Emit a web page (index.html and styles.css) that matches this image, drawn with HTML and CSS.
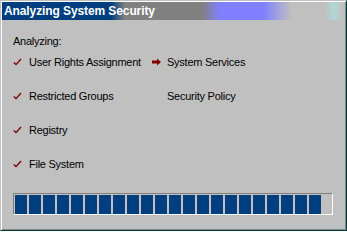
FILE: index.html
```
<!DOCTYPE html>
<html lang="en">
<head>
    <meta charset="UTF-8">
    <title>Analyzing System Security</title>
    <link rel="stylesheet" href="styles.css">
</head>
<body>
    <div class="window">
        <div class="titlebar">Analyzing System Security</div>
        <div class="content">
            <p class="heading">Analyzing:</p>
            <ul class="tasks">
                <li class="task"><span class="icon"><svg width="9" height="8" viewBox="0 0 9 8"><path d="M0.8 4.6 L3 6.6 L8 1" fill="none" stroke="#800000" stroke-width="1.4"/></svg></span>User Rights Assignment</li>
                <li class="task"><span class="icon"><svg width="11" height="8" viewBox="0 0 11 8"><path d="M1 2.5 H6 V0.5 L10 4 L6 7.5 V5.5 H1 Z" fill="#800000"/></svg></span>System Services</li>
                <li class="task"><span class="icon"><svg width="9" height="8" viewBox="0 0 9 8"><path d="M0.8 4.6 L3 6.6 L8 1" fill="none" stroke="#800000" stroke-width="1.4"/></svg></span>Restricted Groups</li>
                <li class="task"><span class="icon"></span>Security Policy</li>
                <li class="task"><span class="icon"><svg width="9" height="8" viewBox="0 0 9 8"><path d="M0.8 4.6 L3 6.6 L8 1" fill="none" stroke="#800000" stroke-width="1.4"/></svg></span>Registry</li>
                <li class="task"></li>
                <li class="task"><span class="icon"><svg width="9" height="8" viewBox="0 0 9 8"><path d="M0.8 4.6 L3 6.6 L8 1" fill="none" stroke="#800000" stroke-width="1.4"/></svg></span>File System</li>
            </ul>
            <div class="progress">
                <span class="block"></span><span class="block"></span><span class="block"></span><span class="block"></span>
                <span class="block"></span><span class="block"></span><span class="block"></span><span class="block"></span>
                <span class="block"></span><span class="block"></span><span class="block"></span><span class="block"></span>
                <span class="block"></span><span class="block"></span><span class="block"></span><span class="block"></span>
                <span class="block"></span><span class="block"></span><span class="block"></span><span class="block"></span>
                <span class="block"></span><span class="block"></span>
            </div>
        </div>
    </div>
</body>
</html>
```

FILE: styles.css
```
body {
    margin: 0;
    background: #ffffff;
    font-family: 'Liberation Sans', Arial, sans-serif;
}
.window {
    box-sizing: border-box;
    width: 347px;
    height: 231px;
    padding: 1px;
    background: #c0c0c0;
    border: 1px solid;
    border-color: #c0c0c0 #003c3c #003c3c #c0c0c0;
    box-shadow: inset 1px 1px 0 #ffffff, inset -1px -1px 0 #7a8a8a;
}
.titlebar {
    height: 18px;
    width: 340px;
    line-height: 18px;
    padding-left: 2px;
    box-sizing: border-box;
    color: #ffffff;
    font-weight: bold;
    font-size: 12px;
    letter-spacing: -0.1px;
    background: linear-gradient(to right,
        #003f7f 0, #003f7f 109px,
        #808080 123px, #808080 200px,
        #8080ff 218px, #8080ff 262px,
        #a0a0e0 275px, #c0c0c0 290px,
        #c0c0c0 323px, #b0d8d8 332px, #c0c0c0 340px);
}
.content {
    padding-left: 11px;
}
.heading {
    margin: 14px 0 0;
    font-size: 11px;
    line-height: 14px;
    letter-spacing: -0.25px;
}
.tasks {
    list-style: none;
    margin: 7px 0 0;
    padding: 0;
    display: grid;
    grid-template-columns: 138px 1fr;
    row-gap: 20px;
}
.task {
    display: flex;
    align-items: center;
    height: 14px;
    font-size: 11px;
    line-height: 14px;
    letter-spacing: -0.25px;
}
.icon {
    width: 16px;
    height: 14px;
    display: flex;
    align-items: center;
}
.progress {
    box-sizing: border-box;
    display: flex;
    gap: 2px;
    width: 320px;
    height: 22px;
    margin-top: 22px;
    padding: 1px 1px 0;
    border: 1px solid;
    border-color: #808080 #ffffff #ffffff #808080;
}
.block {
    width: 12px;
    height: 19px;
    background: #003f7f;
}
```
